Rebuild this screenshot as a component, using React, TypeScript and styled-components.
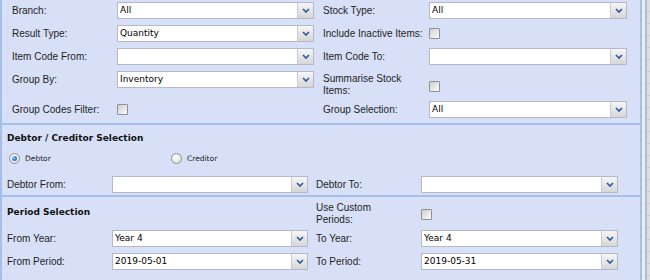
import React from "react";
import styled, { createGlobalStyle } from "styled-components";

const GlobalStyle = createGlobalStyle`
	html, body {
		margin: 0;
		padding: 0;
		background: #d7e0f7;
	}
	body {
		font-family: "Liberation Sans", Arial, sans-serif;
	}
`;

const Page = styled.div`
	display: flex;
	width: 650px;
	height: 280px;
	overflow: hidden;
`;

const Panel = styled.div`
	width: 642px;
	flex-shrink: 0;
	box-sizing: border-box;
	background: #d7e0f7;
	border-left: 2px solid #a3c0ea;
	border-right: 2px solid #a3c0ea;
`;

const SideStrip = styled.div`
	flex: 1;
	background: repeating-linear-gradient(to bottom, #dadee5 0px, #dadee5 11px, #c6cbd4 11px, #c6cbd4 12px);
	border-left: 3px solid #e9edf3;
	box-shadow: inset 2px 0 0 #b6bcc8;
`;

const Section = styled.div<{ $pt: number; $pb: number; $pl: number; $last?: boolean }>`
	padding: ${(p) => p.$pt}px 0 ${(p) => p.$pb}px ${(p) => p.$pl}px;
	border-bottom: ${(p) => (p.$last ? "none" : "2px solid #a3c0ea")};
`;

const FormGrid = styled.div<{ $cols: string; $rows: string }>`
	display: grid;
	grid-template-columns: ${(p) => p.$cols};
	grid-template-rows: ${(p) => p.$rows};
	row-gap: 2px;
	align-items: center;
`;

const Cell = styled.div<{ $align?: "start" | "center" | "end"; $pad?: number; $span?: number }>`
	display: flex;
	align-items: center;
	min-height: 21px;
	align-self: ${(p) => p.$align || "center"};
	padding-left: ${(p) => p.$pad || 0}px;
	grid-column: ${(p) => (p.$span ? `span ${p.$span}` : "auto")};
`;

const Label = styled.label`
	font-size: 10px;
	line-height: 12px;
	color: #1e1e1e;
	white-space: nowrap;
`;

const Heading = styled.div`
	font-family: "DejaVu Sans", Tahoma, sans-serif;
	font-weight: bold;
	font-size: 9px;
	line-height: 13px;
	color: #111;
`;

const HeadingRow = styled.div`
	display: flex;
	align-items: center;
	height: 21px;
`;

const RadioRow = styled.div`
	display: grid;
	grid-template-columns: 162px 162px;
	height: 19px;
	align-items: center;
	padding-left: 2px;
	margin-bottom: 6px;
`;

const RadioItem = styled.label`
	display: flex;
	align-items: center;
	gap: 5px;
	font-family: "DejaVu Sans", Tahoma, sans-serif;
	font-size: 7.5px;
	color: #222;
`;

const RadioDot = styled.span<{ $on?: boolean }>`
	position: relative;
	width: 11px;
	height: 11px;
	box-sizing: border-box;
	border-radius: 50%;
	border: 1px solid #8c8f94;
	background: radial-gradient(circle at 40% 35%, #ffffff 0%, #e4e4e4 70%, #cfcfcf 100%);
	&::after {
		content: "";
		display: ${(p) => (p.$on ? "block" : "none")};
		position: absolute;
		inset: 2px;
		border-radius: 50%;
		background: radial-gradient(circle at 35% 35%, #8fd0ff 0%, #2b7ad8 55%, #124f9e 100%);
	}
`;

const Box = styled.span`
	width: 11px;
	height: 11px;
	box-sizing: border-box;
	border: 1px solid #8e9094;
	border-radius: 1px;
	background: linear-gradient(135deg, #cfcfcf 0%, #e8e8e8 55%, #fafafa 100%);
`;

const SelectBox = styled.div`
	display: flex;
	width: 100%;
	height: 17px;
	box-sizing: border-box;
	border: 1px solid #b5b8c8;
	background: #fff;
`;

const SelectText = styled.span`
	flex: 1;
	padding-left: 2px;
	font-family: "DejaVu Sans", Tahoma, sans-serif;
	font-size: 9px;
	line-height: 15px;
	color: #000;
	white-space: nowrap;
	overflow: hidden;
`;

const Trigger = styled.span`
	width: 15px;
	display: flex;
	align-items: center;
	justify-content: center;
	border-left: 1px solid #c9cbd3;
	background: linear-gradient(to bottom, #f6f6f6 0%, #e6e6e6 50%, #d6d6d6 100%);
`;

const Select = ({ value }: { value?: string }) => (
	<SelectBox>
		<SelectText>{value}</SelectText>
		<Trigger>
			<svg width='8' height='5' viewBox='0 0 8 5'>
				<path d='M1 1 L4 4 L7 1' fill='none' stroke='#2c5aa0' strokeWidth='1.7' />
			</svg>
		</Trigger>
	</SelectBox>
);

const TOP_COLS = "105px 197px 115px 198px";
const LOW_COLS = "105px 196px 113px 197px";

const App = () => {
	return (
		<>
			<GlobalStyle />
			<Page>
				<Panel>
					<Section $pt={0} $pb={3} $pl={10}>
						<FormGrid $cols={TOP_COLS} $rows='21px 21px 21px 28px 21px'>
							<Cell>
								<Label>Branch:</Label>
							</Cell>
							<Cell>
								<Select value='All' />
							</Cell>
							<Cell $pad={9}>
								<Label>Stock Type:</Label>
							</Cell>
							<Cell>
								<Select value='All' />
							</Cell>

							<Cell>
								<Label>Result Type:</Label>
							</Cell>
							<Cell>
								<Select value='Quantity' />
							</Cell>
							<Cell $pad={9}>
								<Label>Include Inactive Items:</Label>
							</Cell>
							<Cell>
								<Box />
							</Cell>

							<Cell>
								<Label>Item Code From:</Label>
							</Cell>
							<Cell>
								<Select />
							</Cell>
							<Cell $pad={9}>
								<Label>Item Code To:</Label>
							</Cell>
							<Cell>
								<Select />
							</Cell>

							<Cell $align='start'>
								<Label>Group By:</Label>
							</Cell>
							<Cell $align='start'>
								<Select value='Inventory' />
							</Cell>
							<Cell $pad={9} $align='end'>
								<Label>
									Summarise Stock
									<br />
									Items:
								</Label>
							</Cell>
							<Cell $align='end'>
								<Box />
							</Cell>

							<Cell>
								<Label>Group Codes Filter:</Label>
							</Cell>
							<Cell>
								<Box />
							</Cell>
							<Cell $pad={9}>
								<Label>Group Selection:</Label>
							</Cell>
							<Cell>
								<Select value='All' />
							</Cell>
						</FormGrid>
					</Section>

					<Section $pt={3} $pb={0} $pl={5}>
						<HeadingRow>
							<Heading>Debtor / Creditor Selection</Heading>
						</HeadingRow>
						<RadioRow>
							<RadioItem>
								<RadioDot $on />
								Debtor
							</RadioItem>
							<RadioItem>
								<RadioDot />
								Creditor
							</RadioItem>
						</RadioRow>
						<FormGrid $cols={LOW_COLS} $rows='21px'>
							<Cell>
								<Label>Debtor From:</Label>
							</Cell>
							<Cell>
								<Select />
							</Cell>
							<Cell $pad={8}>
								<Label>Debtor To:</Label>
							</Cell>
							<Cell>
								<Select />
							</Cell>
						</FormGrid>
					</Section>

					<Section $pt={5} $pb={0} $pl={5} $last>
						<FormGrid $cols={LOW_COLS} $rows='24px 21px 21px'>
							<Cell $span={2} $align='start'>
								<Heading>Period Selection</Heading>
							</Cell>
							<Cell $pad={8}>
								<Label>
									Use Custom
									<br />
									Periods:
								</Label>
							</Cell>
							<Cell>
								<Box />
							</Cell>

							<Cell>
								<Label>From Year:</Label>
							</Cell>
							<Cell>
								<Select value='Year 4' />
							</Cell>
							<Cell $pad={8}>
								<Label>To Year:</Label>
							</Cell>
							<Cell>
								<Select value='Year 4' />
							</Cell>

							<Cell>
								<Label>From Period:</Label>
							</Cell>
							<Cell>
								<Select value='2019-05-01' />
							</Cell>
							<Cell $pad={8}>
								<Label>To Period:</Label>
							</Cell>
							<Cell>
								<Select value='2019-05-31' />
							</Cell>
						</FormGrid>
					</Section>
				</Panel>
				<SideStrip />
			</Page>
		</>
	);
};

export default App;
